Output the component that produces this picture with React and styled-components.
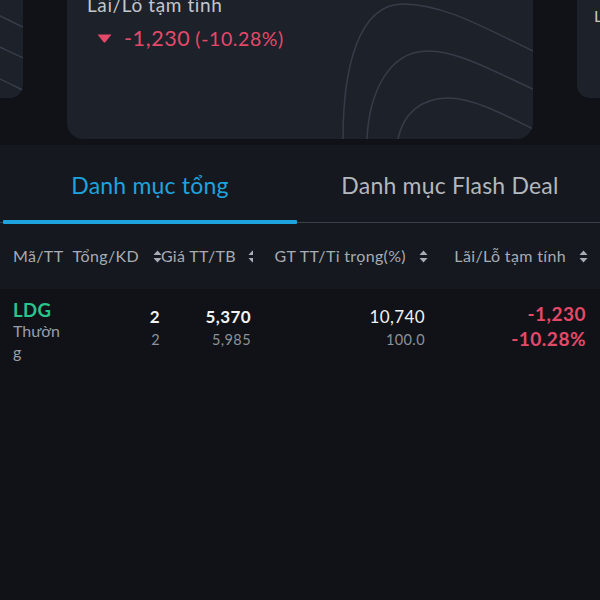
import React from "react";
import styled, { createGlobalStyle } from "styled-components";

const GlobalStyle = createGlobalStyle`
  html, body { margin: 0; padding: 0; background: #101217; }
  body { font-family: "Lato", "Noto Sans", sans-serif; -webkit-font-smoothing: antialiased; }
  * { box-sizing: border-box; }
`;

const Page = styled.div`
  width: 600px;
  height: 600px;
  overflow: hidden;
  background: #101217;
  display: flex;
  flex-direction: column;
`;

const Carousel = styled.div`
  height: 145px;
  flex-shrink: 0;
  overflow: hidden;
  display: flex;
  justify-content: center;
  align-items: flex-start;
`;

const Track = styled.div`
  margin-top: -80px;
  display: flex;
  align-items: flex-start;
  gap: 44px;
  flex-shrink: 0;
`;

const Card = styled.div`
  position: relative;
  flex-shrink: 0;
  width: ${(p) => (p.$main ? 466 : 400)}px;
  height: ${(p) => (p.$main ? 219 : 178)}px;
  border-radius: ${(p) => (p.$main ? 16 : 13)}px;
  background: #1d2129;
  overflow: hidden;
  padding: ${(p) => (p.$main ? "73px 20px 0" : "84px 17px 0")};
`;

const CardLabel = styled.div`
  position: relative;
  font-size: ${(p) => (p.$small ? 16 : 19)}px;
  line-height: 24px;
  color: #c3c6cc;
  letter-spacing: 0.6px;
`;

const ValueRow = styled.div`
  position: relative;
  margin-top: 8px;
  padding-left: 10px;
  display: flex;
  align-items: center;
  gap: 12px;
  font-size: 21.5px;
  line-height: 26px;
  color: #e5496a;
  letter-spacing: 0.6px;
`;

const Pct = styled.span`
  font-size: 19.5px;
  margin-left: 5px;
`;

const Deco = styled.svg`
  position: absolute;
  right: 0;
  bottom: 0;
  pointer-events: none;
`;

const Contours = ({ scale = 1 }) => (
  <Deco width={200 * scale} height={140 * scale} viewBox="0 0 200 140" fill="none">
    <g stroke="#363d49" strokeWidth={1.5 / scale}>
      <path d="M10,140 C10,70 25,5 70,5 C110,5 150,28 200,52" />
      <path d="M34,140 C36,95 55,52 95,52 C125,52 160,72 200,90" />
      <path d="M65,140 C70,115 88,99 115,99 C140,99 170,115 200,130" />
    </g>
  </Deco>
);

const DownTriangle = () => (
  <svg width="15" height="9" viewBox="0 0 15 9">
    <path d="M0.5,0.5 L14.5,0.5 L8.3,8.2 Q7.5,9 6.7,8.2 Z" fill="#e5496a" />
  </svg>
);

const TabBar = styled.div`
  height: 78px;
  flex-shrink: 0;
  display: grid;
  grid-template-columns: 1fr 1fr;
  background: #15181e;
  border-bottom: 1.5px solid #3a3f48;
`;

const Tab = styled.div`
  position: relative;
  display: flex;
  align-items: center;
  justify-content: center;
  padding-top: 2px;
  font-size: 23px;
  letter-spacing: 0.2px;
  color: ${(p) => (p.$active ? "#1ea3df" : "#b3b7be")};
  &::after {
    content: "";
    display: ${(p) => (p.$active ? "block" : "none")};
    position: absolute;
    left: 3px;
    right: 3px;
    bottom: -1.5px;
    height: 3.5px;
    background: #1ea3df;
    border-radius: 1px;
  }
`;

const HeaderRow = styled.div`
  height: 66px;
  flex-shrink: 0;
  display: flex;
  align-items: center;
  background: #15181e;
  padding-left: 13px;
`;

const HeadCell = styled.div`
  width: ${(p) => p.$w}px;
  flex-shrink: 0;
  display: flex;
  align-items: center;
  justify-content: ${(p) => (p.$left ? "flex-start" : "flex-end")};
  gap: ${(p) => p.$gap ?? 13}px;
  font-size: 16px;
  line-height: 20px;
  color: #a8acb4;
  letter-spacing: 0.35px;
  white-space: nowrap;
`;

const IconClip = styled.span`
  display: inline-flex;
  width: ${(p) => p.$w}px;
  overflow: hidden;
  flex-shrink: 0;
`;

const SortIcon = () => (
  <svg width="9" height="13" viewBox="0 0 9 13" style={{ flexShrink: 0 }}>
    <path d="M4.5,0.5 L8.5,5 L0.5,5 Z" fill="#a8acb4" />
    <path d="M4.5,12.5 L8.5,8 L0.5,8 Z" fill="#a8acb4" />
  </svg>
);

const DataRow = styled.div`
  display: flex;
  align-items: flex-start;
  padding: 11px 0 0 13px;
`;

const CodeCell = styled.div`
  width: 57px;
  flex-shrink: 0;
`;

const Code = styled.div`
  font-size: 18.5px;
  line-height: 20px;
  font-weight: 700;
  color: #2cc38d;
  letter-spacing: 0.4px;
`;

const Kind = styled.div`
  width: 50px;
  font-size: 16px;
  line-height: 21px;
  color: #9a9ea6;
  word-break: break-all;
`;

const NumCell = styled.div`
  width: ${(p) => p.$w}px;
  flex-shrink: 0;
  padding-top: ${(p) => p.$pt ?? 3}px;
  padding-right: ${(p) => p.$pr ?? 2}px;
  display: flex;
  flex-direction: column;
  align-items: flex-end;
`;

const Primary = styled.div`
  font-size: 17px;
  line-height: 28px;
  font-weight: ${(p) => (p.$bold ? 700 : 400)};
  color: #f1f2f4;
  letter-spacing: 0.4px;
`;

const Secondary = styled.div`
  font-size: 14.5px;
  line-height: 18px;
  color: #8d9199;
  letter-spacing: 0.4px;
`;

const Loss = styled.div`
  font-size: 19px;
  line-height: 25px;
  font-weight: 700;
  color: #e5496a;
  letter-spacing: 0.5px;
`;

export default function App() {
  return (
    <>
      <GlobalStyle />
      <Page>
        <Carousel>
          <Track>
            <Card>
              <Contours scale={0.81} />
              <CardLabel $small>Lãi/Lỗ tạm tính</CardLabel>
            </Card>
            <Card $main>
              <Contours />
              <CardLabel>Lãi/Lỗ tạm tính</CardLabel>
              <ValueRow>
                <DownTriangle />
                <span>
                  -1,230<Pct>(-10.28%)</Pct>
                </span>
              </ValueRow>
            </Card>
            <Card>
              <Contours scale={0.81} />
              <CardLabel $small>Lãi/Lỗ tạm tính</CardLabel>
            </Card>
          </Track>
        </Carousel>

        <TabBar>
          <Tab $active>Danh mục tổng</Tab>
          <Tab>Danh mục Flash Deal</Tab>
        </TabBar>

        <HeaderRow>
          <HeadCell $w={57} $left>Mã/TT</HeadCell>
          <HeadCell $w={92} $gap={14}>
            Tổng/KD <SortIcon />
          </HeadCell>
          <HeadCell $w={91} $gap={12}>
            Giá TT/TB
            <IconClip $w={5}>
              <SortIcon />
            </IconClip>
          </HeadCell>
          <HeadCell $w={175}>
            GT TT/Tỉ trọng(%) <SortIcon />
          </HeadCell>
          <HeadCell $w={160}>
            Lãi/Lỗ tạm tính <SortIcon />
          </HeadCell>
        </HeaderRow>

        <DataRow>
          <CodeCell>
            <Code>LDG</Code>
            <Kind>Thường</Kind>
          </CodeCell>
          <NumCell $w={92}>
            <Primary $bold>2</Primary>
            <Secondary>2</Secondary>
          </NumCell>
          <NumCell $w={91}>
            <Primary $bold>5,370</Primary>
            <Secondary>5,985</Secondary>
          </NumCell>
          <NumCell $w={175} $pr={3}>
            <Primary>10,740</Primary>
            <Secondary>100.0</Secondary>
          </NumCell>
          <NumCell $w={160} $pr={2} $pt={1}>
            <Loss>-1,230</Loss>
            <Loss>-10.28%</Loss>
          </NumCell>
        </DataRow>
      </Page>
    </>
  );
}
